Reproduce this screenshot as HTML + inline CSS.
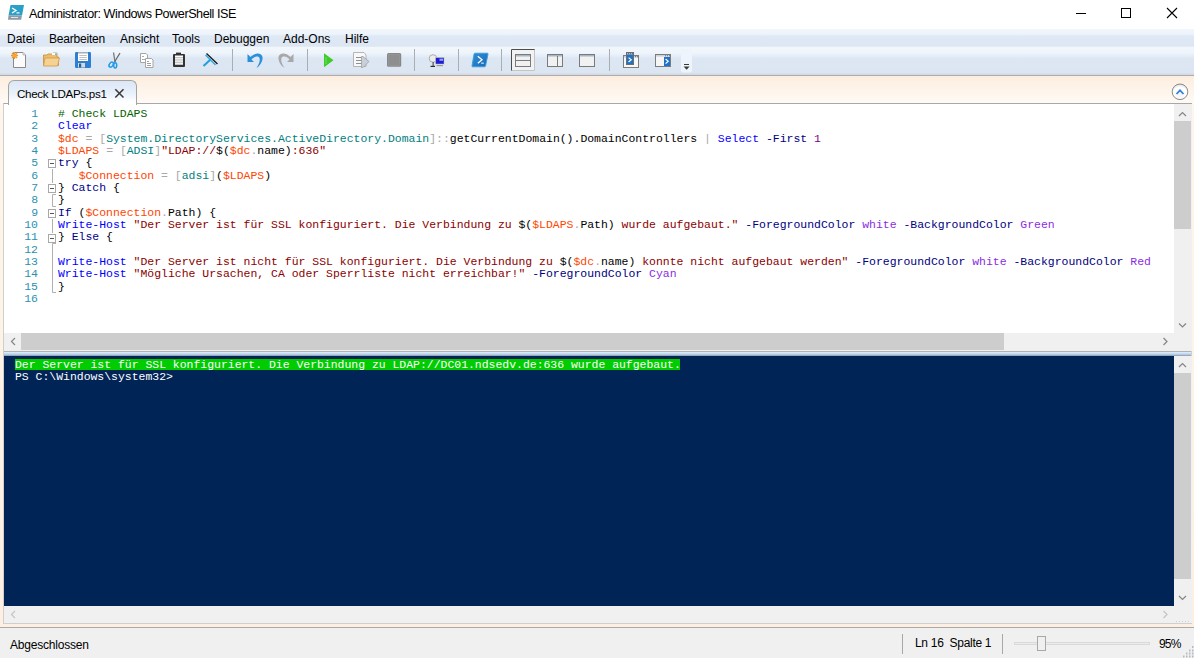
<!DOCTYPE html>
<html><head><meta charset="utf-8">
<style>
html,body{margin:0;padding:0;}
body{width:1194px;height:658px;position:relative;overflow:hidden;background:#fff;font-family:"Liberation Sans",sans-serif;}
.a{position:absolute;}
.ui{font-family:"Liberation Sans",sans-serif;font-size:12px;color:#000;white-space:pre;line-height:14px;}
#title{left:0;top:0;width:1194px;height:29px;background:#fff;}
#menubar{left:0;top:29px;width:1194px;height:18px;background:linear-gradient(#f1f6fc 0px,#eef4fb 5px,#dfe9f5 7px,#dde7f4 17px,#e6eef8 18px);}
#toolbar{left:0;top:47px;width:1194px;height:28px;background:linear-gradient(#f3f7fc 0px,#eef4fb 6px,#e4edf7 9px,#dde7f4 11px,#dce6f3 26px,#d5dae0 27px,#d5dae0 28px);}
#tbline{left:0;top:75px;width:1194px;height:1px;background:#a9adb3;}
#tabarea{left:0;top:76px;width:1194px;height:552px;background:linear-gradient(#fdeddf 0px,#fef5ec 16px,#fffaf6 27px,#fff5ea 28px,#fdf0e2 552px);}
#tab{left:8px;top:80px;width:129px;height:25px;border:1px solid #a3a3a3;border-bottom:none;border-radius:6px 6px 0 0;background:linear-gradient(#dce7f6,#e8f0fa 50%,#fff 88%);box-sizing:border-box;}
#editor{left:3px;top:103px;width:1189px;height:248px;background:#fff;border-top:1px solid #a8a8a8;border-left:1px solid #d8d0c8;box-sizing:border-box;}
pre{margin:0;font-family:"Liberation Mono",monospace;font-size:11.46px;line-height:12.33px;white-space:pre;}
.ln{color:#2b91af;text-align:right;}
.cm{color:#006400}.cd{color:#0000ff}.vr{color:#ff4500}.op{color:#a9a9a9}.ty{color:#008080}.st{color:#8b0000}.kw{color:#00008b}.pa{color:#000080}.ar{color:#8a2be2}.nu{color:#800080}
.sbv{background:#f0f0f0;}
.thumb{background:#cdcdcd;}
#split{left:3px;top:351px;width:1189px;height:5px;background:linear-gradient(#b2b2b2 0 1px,#dae9f6 1px 2px,#c3dbf4 2px 3px,#a9cdf5 3px 4px,#a2a6ab 4px 5px);}
#console{left:4px;top:356px;width:1170px;height:250px;background:#012456;}
#status{left:0;top:627px;width:1194px;height:31px;background:#f0f0f0;border-top:1px solid #a9a9a9;box-sizing:border-box;}
</style></head><body>
<div id="title" class="a"></div>
<div id="menubar" class="a"></div>
<div id="toolbar" class="a"></div>
<div id="tbline" class="a"></div>
<div id="tabarea" class="a"></div>
<div id="editor" class="a"></div>
<div id="tab" class="a"></div>
<div id="split" class="a"></div>
<div id="console" class="a"></div>
<div id="status" class="a"></div>
<div class="a" style="left:3px;top:104px;width:1189px;height:520px;border:1px solid #cfcfcf;border-top:none;box-sizing:border-box;"></div>

<svg class="a" style="left:0;top:0" width="1194" height="110" viewBox="0 0 1194 110">
<!-- title icon -->
<path d="M10.5,5 H24 L22,15.5 H8.5 Z" fill="#2a9fc8"/>
<path d="M8.5,15.5 H22 L21.2,19.7 H8 Z" fill="#8c9aa6"/>
<path d="M12,8 L16,10.5 L12,13" fill="none" stroke="#fff" stroke-width="1.4"/>
<rect x="16.5" y="12.3" width="3" height="1.2" fill="#fff"/>
<rect x="11" y="17" width="7" height="1" fill="#dfe6ec"/>
<!-- window controls -->
<rect x="1076" y="13" width="10" height="1" fill="#000"/>
<rect x="1121.5" y="8.5" width="9" height="9" fill="none" stroke="#000" stroke-width="1"/>
<path d="M1167,8 L1177,18 M1177,8 L1167,18" stroke="#000" stroke-width="1.1"/>
<!-- new -->
<path d="M13.5,52.5 H23 L25.5,55 V67.5 H13.5 Z" fill="#fbfbfb" stroke="#8a8a8a"/>
<path d="M23,52.5 V55 H25.5" fill="#e8e8e8" stroke="#b0b0b0" stroke-width="0.8"/>
<g stroke="#f39a22" stroke-width="1.3"><path d="M14.5,52 V59 M11,55.5 H18 M12,53 L17,58 M17,53 L12,58"/></g>
<circle cx="14.5" cy="55.5" r="1.6" fill="#f7a63a"/>
<!-- folder -->
<path d="M43.5,55 H47 L48,54 H53 V53 H57 V57 H58.5 V65.5 H43.5 Z" fill="#eebd6c" stroke="#c78f3e" stroke-width="0.8"/>
<rect x="52" y="53" width="5" height="2" fill="#fff"/><rect x="55" y="53.5" width="2" height="1.2" fill="#3a9ae0"/>
<path d="M45,58 H59.5 L57.5,66 H43.5 Z" fill="#f6d292" stroke="#cf9b4a" stroke-width="0.8"/>
<!-- save -->
<rect x="75" y="52" width="16" height="16" rx="1.2" fill="#2e7fd2"/>
<rect x="78" y="52.5" width="10" height="8.5" fill="#fff"/>
<rect x="78" y="52.5" width="10" height="1" fill="#a8a8a8"/>
<rect x="79.3" y="55.2" width="7.5" height="0.8" fill="#b0b0b0"/><rect x="79.3" y="57.2" width="7.5" height="0.8" fill="#b0b0b0"/><rect x="79.3" y="59.2" width="7.5" height="0.8" fill="#b0b0b0"/>
<rect x="78" y="63" width="7" height="4.5" fill="#d8d8d8"/><rect x="79" y="63.5" width="2.2" height="4" fill="#1f5fb0"/>
<!-- scissors -->
<path d="M113.5,52.5 L115,62" stroke="#7a7a7a" stroke-width="1.3"/>
<path d="M120,53 L114.5,62" stroke="#6a6a6a" stroke-width="1.3"/>
<ellipse cx="111.2" cy="64.6" rx="1.8" ry="2.8" transform="rotate(35 111.2 64.6)" fill="none" stroke="#1e9be8" stroke-width="1.5"/>
<ellipse cx="115.2" cy="65.3" rx="1.5" ry="2.6" fill="none" stroke="#1e9be8" stroke-width="1.5"/>
<!-- copy -->
<path d="M140.5,53.5 H146 L147.5,55 V62.5 H140.5 Z" fill="#fff" stroke="#a5a5a5"/>
<path d="M145.5,58.5 H151.5 L153,60 V67.5 H145.5 Z" fill="#fff" stroke="#a5a5a5"/>
<rect x="142" y="56" width="2" height="0.8" fill="#999"/><rect x="142" y="59" width="3.5" height="0.8" fill="#999"/>
<rect x="147" y="61" width="2" height="0.8" fill="#888"/><rect x="147" y="63" width="4" height="0.8" fill="#888"/><rect x="147" y="65" width="4" height="0.8" fill="#888"/>
<!-- paste -->
<rect x="173" y="54" width="12" height="13" rx="1" fill="#333"/>
<rect x="176" y="52.6" width="5" height="2" fill="#333"/>
<rect x="175" y="55.5" width="8" height="9.5" fill="#fff"/>
<rect x="175" y="57.3" width="8" height="0.9" fill="#aaa"/><rect x="175" y="59.5" width="8" height="0.9" fill="#aaa"/><rect x="175" y="61.7" width="8" height="0.9" fill="#aaa"/><rect x="175" y="63.8" width="8" height="0.9" fill="#aaa"/>
<!-- clear -->
<path d="M206.5,53.5 L217.5,64" stroke="#1c1c1c" stroke-width="1.4"/>
<path d="M205.5,55 L215.5,65" stroke="#29a8e6" stroke-width="1.2"/>
<path d="M203.5,66 L210.5,59.5" stroke="#1f9fe0" stroke-width="2"/>
<!-- separators -->
<g fill="#a9aeb5"><rect x="232" y="49" width="1" height="22"/><rect x="307" y="49" width="1" height="22"/><rect x="414" y="49" width="1" height="22"/><rect x="458" y="49" width="1" height="22"/><rect x="501" y="49" width="1" height="22"/><rect x="609" y="49" width="1" height="22"/></g>
<!-- undo -->
<path d="M247.5,54 L247.5,62 L254,62 L251.5,59.5 C254,56.5 258,55.5 259.5,58 C260.5,61 258.5,65 256.5,67.8 C260,66 263,61 262.5,57 C261.5,52.5 255.5,52 250.5,57 Z" fill="#2b90dc"/>
<!-- redo -->
<path d="M293.5,54 L293.5,62 L287,62 L289.5,59.5 C287,56.5 283,55.5 281.5,58 C280.5,61 282.5,65 284.5,67.8 C281,66 278,61 278.5,57 C279.5,52.5 285.5,52 290.5,57 Z" fill="#a8a8a8"/>
<!-- run -->
<path d="M324,53.2 V67.2 L333.5,60.2 Z" fill="#3ccc27"/>
<path d="M326,57 V64" stroke="#8ce07c" stroke-width="0.8"/>
<!-- run selection -->
<path d="M353.5,52.5 H364 L366,55 V66.5 H353.5 Z" fill="#f8f8f8" stroke="#b5b5b5"/>
<rect x="356" y="57" width="6" height="1" fill="#909090"/><rect x="356" y="60" width="6" height="1" fill="#909090"/><rect x="356" y="63" width="6" height="1" fill="#909090"/>
<path d="M361.5,56.5 H363 L369,61.5 L363,67.5 H361.5 Z" fill="#c9d0d8" stroke="#9aa0a6" stroke-width="0.8"/>
<!-- stop -->
<rect x="387" y="53" width="14.2" height="13.8" rx="1.5" fill="#878787"/>
<rect x="388.5" y="54.5" width="11" height="11" fill="#8e8e8e" stroke="#9c9c9c" stroke-width="0.6"/>
<!-- remote -->
<circle cx="433" cy="58.5" r="3.8" fill="#ececec" stroke="#a5a5a5" stroke-width="0.9"/>
<rect x="432.6" y="62" width="1" height="4" fill="#3a3a3a"/><rect x="430.5" y="65.8" width="4.5" height="1.2" fill="#2a2a2a"/>
<rect x="435" y="57" width="9.5" height="7.6" fill="#d6d0c8"/>
<rect x="435.8" y="57.8" width="8" height="6" fill="#1b1bd8"/>
<rect x="439.5" y="58.6" width="3.6" height="2.2" fill="#9aa8ec"/>
<rect x="436.5" y="65" width="6.5" height="1.2" fill="#9a9a9a"/>
<!-- ps -->
<defs><linearGradient id="psg" x1="0" y1="0" x2="1" y2="1"><stop offset="0" stop-color="#2f8fd8"/><stop offset="1" stop-color="#1a6ab8"/></linearGradient></defs>
<path d="M475,53.2 H487.3 Q488.3,53.2 488,54.2 L485.6,65.8 Q485.4,66.8 484.4,66.8 H472.7 Q471.7,66.8 472,65.8 L474,54.2 Q474.2,53.2 475,53.2 Z" fill="url(#psg)" stroke="#3aa0d8" stroke-width="0.9"/>
<path d="M477.8,56.3 L482,59.8 L477.8,63.3" fill="none" stroke="#fff" stroke-width="1.3"/>
<rect x="481.2" y="62.6" width="2.6" height="1.1" fill="#e8f2fb"/>
<!-- pressed button -->
<rect x="511" y="49" width="24" height="22" fill="#f2f2f2"/>
<path d="M511.5,71 V49.5 H535" fill="none" stroke="#4d4d4d" stroke-width="1"/>
<path d="M511.5,70.5 H534.5 V49.5" fill="none" stroke="#c4c4c4" stroke-width="1"/>
<!-- layout 1 -->
<rect x="515.5" y="54.5" width="15" height="12" fill="#f1f1f1" stroke="#7a7a7a"/>
<rect x="516" y="55" width="14" height="1.5" fill="#a3b8c8"/>
<rect x="515.5" y="60" width="15" height="1" fill="#7a7a7a"/>
<!-- layout 2 -->
<rect x="547.5" y="54.5" width="15" height="12" fill="#f1f1f1" stroke="#7a7a7a"/>
<rect x="548" y="55" width="14" height="1.5" fill="#a3b8c8"/>
<rect x="557" y="56" width="1" height="10.5" fill="#7a7a7a"/>
<!-- layout 3 -->
<rect x="579.5" y="54.5" width="15" height="12" fill="#f1f1f1" stroke="#7a7a7a"/>
<rect x="580" y="55" width="14" height="1.5" fill="#a3b8c8"/>
<!-- icon 4 -->
<rect x="623.5" y="55.5" width="15" height="12" fill="#f8f8f8" stroke="#7c7c7c"/>
<rect x="624" y="56" width="14" height="1.6" fill="#c9d3dc"/>
<rect x="635" y="56.2" width="1" height="1" fill="#666"/><rect x="637" y="56.2" width="1" height="1" fill="#666"/>
<rect x="626.5" y="52.5" width="7" height="12" fill="#1f72c8" stroke="#6c6c6c"/>
<rect x="627" y="53" width="6" height="1.6" fill="#b0b8c0"/>
<rect x="628" y="53.3" width="1" height="1" fill="#555"/><rect x="630" y="53.3" width="1" height="1" fill="#555"/><rect x="632" y="53.3" width="1" height="1" fill="#555"/>
<path d="M628.6,57.6 L631.2,59.8 L628.6,62" fill="none" stroke="#fff" stroke-width="1.2"/>
<!-- icon 5 -->
<rect x="655.5" y="54.5" width="15" height="12" fill="#f6f6f6" stroke="#7c7c7c"/>
<rect x="656" y="55" width="14" height="1.6" fill="#c9d3dc"/>
<rect x="665" y="55.3" width="1" height="1" fill="#666"/><rect x="667" y="55.3" width="1" height="1" fill="#666"/><rect x="669" y="55.3" width="1" height="1" fill="#666"/>
<rect x="664" y="57" width="6" height="9" fill="#1f72c8"/>
<path d="M665.6,59 L668.2,61.3 L665.6,63.6" fill="none" stroke="#fff" stroke-width="1.2"/>
<!-- overflow -->
<rect x="681" y="49" width="11" height="23.5" rx="2" fill="#edf4fb"/>
<rect x="684" y="64" width="5" height="1" fill="#3a3a3a"/>
<path d="M683.6,66.6 H689.6 L686.6,69.8 Z" fill="#3a3a3a"/>
<!-- tab close -->
<path d="M115.3,89.3 L123.5,97.5 M123.5,89.3 L115.3,97.5" stroke="#3c3c3c" stroke-width="1.6"/>
<!-- circle button -->
<circle cx="1180" cy="91.8" r="7.8" fill="url(#cbg)" stroke="#8a8a8a" stroke-width="1"/>
<path d="M1176.5,94 L1180,90.3 L1183.5,94" fill="none" stroke="#2f7fd6" stroke-width="1.7"/>
<defs><radialGradient id="cbg" cx="0.5" cy="0.7" r="0.7"><stop offset="0" stop-color="#f4f4f4"/><stop offset="0.7" stop-color="#ffffff"/><stop offset="1" stop-color="#d8d8d8"/></radialGradient></defs>
</svg>

<!-- title text -->
<div class="a ui" style="left:29px;top:7px;font-size:12.6px;letter-spacing:-0.44px;">Administrator: Windows PowerShell ISE</div>

<!-- menu -->
<div class="a ui" style="left:7px;top:32px;">Datei</div>
<div class="a ui" style="left:49px;top:32px;letter-spacing:-0.2px;">Bearbeiten</div>
<div class="a ui" style="left:120px;top:32px;">Ansicht</div>
<div class="a ui" style="left:172px;top:32px;">Tools</div>
<div class="a ui" style="left:214px;top:32px;">Debuggen</div>
<div class="a ui" style="left:283px;top:32px;">Add-Ons</div>
<div class="a ui" style="left:345px;top:32px;">Hilfe</div>

<!-- tab text -->
<div class="a ui" style="left:17px;top:87px;font-size:11.6px;letter-spacing:-0.3px;">Check LDAPs.ps1</div>

<!-- code -->
<pre class="a ln" style="left:20px;top:108px;width:18px;">1
2
3
4
5
6
7
8
9
10
11
12
13
14
15
16</pre>
<pre class="a" style="left:58px;top:108px;"><span class="cm"># Check LDAPS</span>
<span class="cd">Clear</span>
<span class="vr">$dc</span> <span class="op">=</span> <span class="op">[</span><span class="ty">System.DirectoryServices.ActiveDirectory.Domain</span><span class="op">]::</span>getCurrentDomain().<span>DomainControllers</span> <span class="op">|</span> <span class="cd">Select</span> <span class="pa">-First</span> <span class="nu">1</span>
<span class="vr">$LDAPS</span> <span class="op">=</span> <span class="op">[</span><span class="ty">ADSI</span><span class="op">]</span><span class="st">"LDAP://</span>$(<span class="vr">$dc</span><span class="op">.</span>name)<span class="st">:636"</span>
<span class="kw">try</span> {
   <span class="vr">$Connection</span> <span class="op">=</span> <span class="op">[</span><span class="ty">adsi</span><span class="op">]</span>(<span class="vr">$LDAPS</span>)
} <span class="kw">Catch</span> {
}
<span class="kw">If</span> (<span class="vr">$Connection</span><span class="op">.</span>Path) {
<span class="cd">Write-Host</span> <span class="st">"Der Server ist für SSL konfiguriert. Die Verbindung zu </span>$(<span class="vr">$LDAPS</span><span class="op">.</span>Path)<span class="st"> wurde aufgebaut."</span> <span class="pa">-ForegroundColor</span> <span class="ar">white</span> <span class="pa">-BackgroundColor</span> <span class="ar">Green</span>
} <span class="kw">Else</span> {

<span class="cd">Write-Host</span> <span class="st">"Der Server ist nicht für SSL konfiguriert. Die Verbindung zu </span>$(<span class="vr">$dc</span><span class="op">.</span>name)<span class="st"> konnte nicht aufgebaut werden"</span> <span class="pa">-ForegroundColor</span> <span class="ar">white</span> <span class="pa">-BackgroundColor</span> <span class="ar">Red</span>
<span class="cd">Write-Host</span> <span class="st">"Mögliche Ursachen, CA oder Sperrliste nicht erreichbar!"</span> <span class="pa">-ForegroundColor</span> <span class="ar">Cyan</span>
}
</pre>

<!-- editor scrollbars -->
<div class="a sbv" style="left:1174px;top:104px;width:18px;height:229px;"></div>
<div class="a thumb" style="left:1174px;top:121px;width:17px;height:108px;"></div>
<div class="a sbv" style="left:4px;top:333px;width:1188px;height:18px;"></div>
<div class="a thumb" style="left:21px;top:333px;width:983px;height:17px;"></div>

<!-- console -->
<div class="a" style="left:15px;top:359px;width:665px;height:11px;background:#00cc00;"></div>
<pre class="a" style="left:15px;top:359px;color:#fff;line-height:12px;font-size:11.44px;">Der Server ist für SSL konfiguriert. Die Verbindung zu LDAP://DC01.ndsedv.de:636 wurde aufgebaut.
PS C:\Windows\system32&gt;</pre>
<div class="a sbv" style="left:1174px;top:356px;width:18px;height:250px;"></div>
<div class="a thumb" style="left:1174px;top:373px;width:17px;height:206px;"></div>
<div class="a sbv" style="left:4px;top:606px;width:1188px;height:17px;"></div>

<!-- status -->
<div class="a ui" style="left:10px;top:638px;letter-spacing:-0.2px;">Abgeschlossen</div>
<div class="a" style="left:902px;top:634px;width:1px;height:20px;background:#a8a8a8;"></div>
<div class="a ui" style="left:915px;top:636px;letter-spacing:-0.3px;">Ln 16  Spalte 1</div>
<div class="a" style="left:1002px;top:634px;width:1px;height:20px;background:#a8a8a8;"></div>
<div class="a" style="left:1014px;top:642px;width:136px;height:3px;background:#ebebeb;border:1px solid #dadada;box-sizing:border-box;"></div>
<div class="a" style="left:1037px;top:636px;width:9px;height:15px;background:#f0f0f0;border:1px solid #a8a8a8;box-sizing:border-box;"></div>
<div class="a ui" style="left:1159px;top:637px;letter-spacing:-0.8px;">95%</div>
<svg class="a" style="left:0;top:100px" width="1194" height="558" viewBox="0 100 1194 558">
<!-- fold markers -->
<g fill="#fff" stroke="#a8a8a8" stroke-width="1">
<rect x="48.5" y="159.5" width="7" height="8"/>
<rect x="48.5" y="184.5" width="7" height="8"/>
<rect x="48.5" y="209.5" width="7" height="8"/>
<rect x="48.5" y="234.5" width="7" height="8"/>
</g>
<g fill="#555">
<rect x="50" y="163" width="4" height="1"/>
<rect x="50" y="188" width="4" height="1"/>
<rect x="50" y="213" width="4" height="1"/>
<rect x="50" y="238" width="4" height="1"/>
</g>
<g fill="none" stroke="#b0b0b0" stroke-width="1">
<path d="M52.5,169 V183"/>
<path d="M56,194.5 H52.5 V206.5 H56"/>
<path d="M52.5,219 V233"/>
<path d="M56,243.5 H52.5 V292.5 H56"/>
</g>
<!-- editor v scrollbar arrows -->
<path d="M1179,116 L1182.5,112.5 L1186,116" fill="none" stroke="#858585" stroke-width="1.2"/>
<path d="M1179,323.5 L1182.5,327 L1186,323.5" fill="none" stroke="#858585" stroke-width="1.2"/>
<!-- editor h scrollbar arrows -->
<path d="M15,338 L11.5,341.5 L15,345" fill="none" stroke="#858585" stroke-width="1.2"/>
<path d="M1163.5,338 L1167,341.5 L1163.5,345" fill="none" stroke="#858585" stroke-width="1.2"/>
<!-- console v scrollbar arrows -->
<path d="M1179,367 L1182.5,363.5 L1186,367" fill="none" stroke="#858585" stroke-width="1.2"/>
<path d="M1179,596 L1182.5,599.5 L1186,596" fill="none" stroke="#858585" stroke-width="1.2"/>
<!-- console h scrollbar arrows (disabled) -->
<path d="M15,611 L11.5,614.5 L15,618" fill="none" stroke="#c4c4c4" stroke-width="1.2"/>
<path d="M1163.5,611 L1167,614.5 L1163.5,618" fill="none" stroke="#c4c4c4" stroke-width="1.2"/>
<!-- bottom-right dots in console corner -->
<g fill="#c8d0dc"><rect x="1176" y="621" width="1" height="1"/><rect x="1179" y="621" width="1" height="1"/><rect x="1182" y="621" width="1" height="1"/><rect x="1185" y="621" width="1" height="1"/><rect x="1188" y="621" width="1" height="1"/></g>
<!-- resize grip -->
<g fill="#b4bac2">
<rect x="1192" y="646" width="1.5" height="2"/>
<rect x="1189" y="649.5" width="1.5" height="2"/><rect x="1192" y="649.5" width="1.5" height="2"/>
<rect x="1186" y="652.5" width="1.5" height="2"/><rect x="1189" y="652.5" width="1.5" height="2"/><rect x="1192" y="652.5" width="1.5" height="2"/>
<rect x="1183" y="655.5" width="1.5" height="2"/><rect x="1186" y="655.5" width="1.5" height="2"/><rect x="1189" y="655.5" width="1.5" height="2"/><rect x="1192" y="655.5" width="1.5" height="2"/>
</g>
</svg>

</body></html>
